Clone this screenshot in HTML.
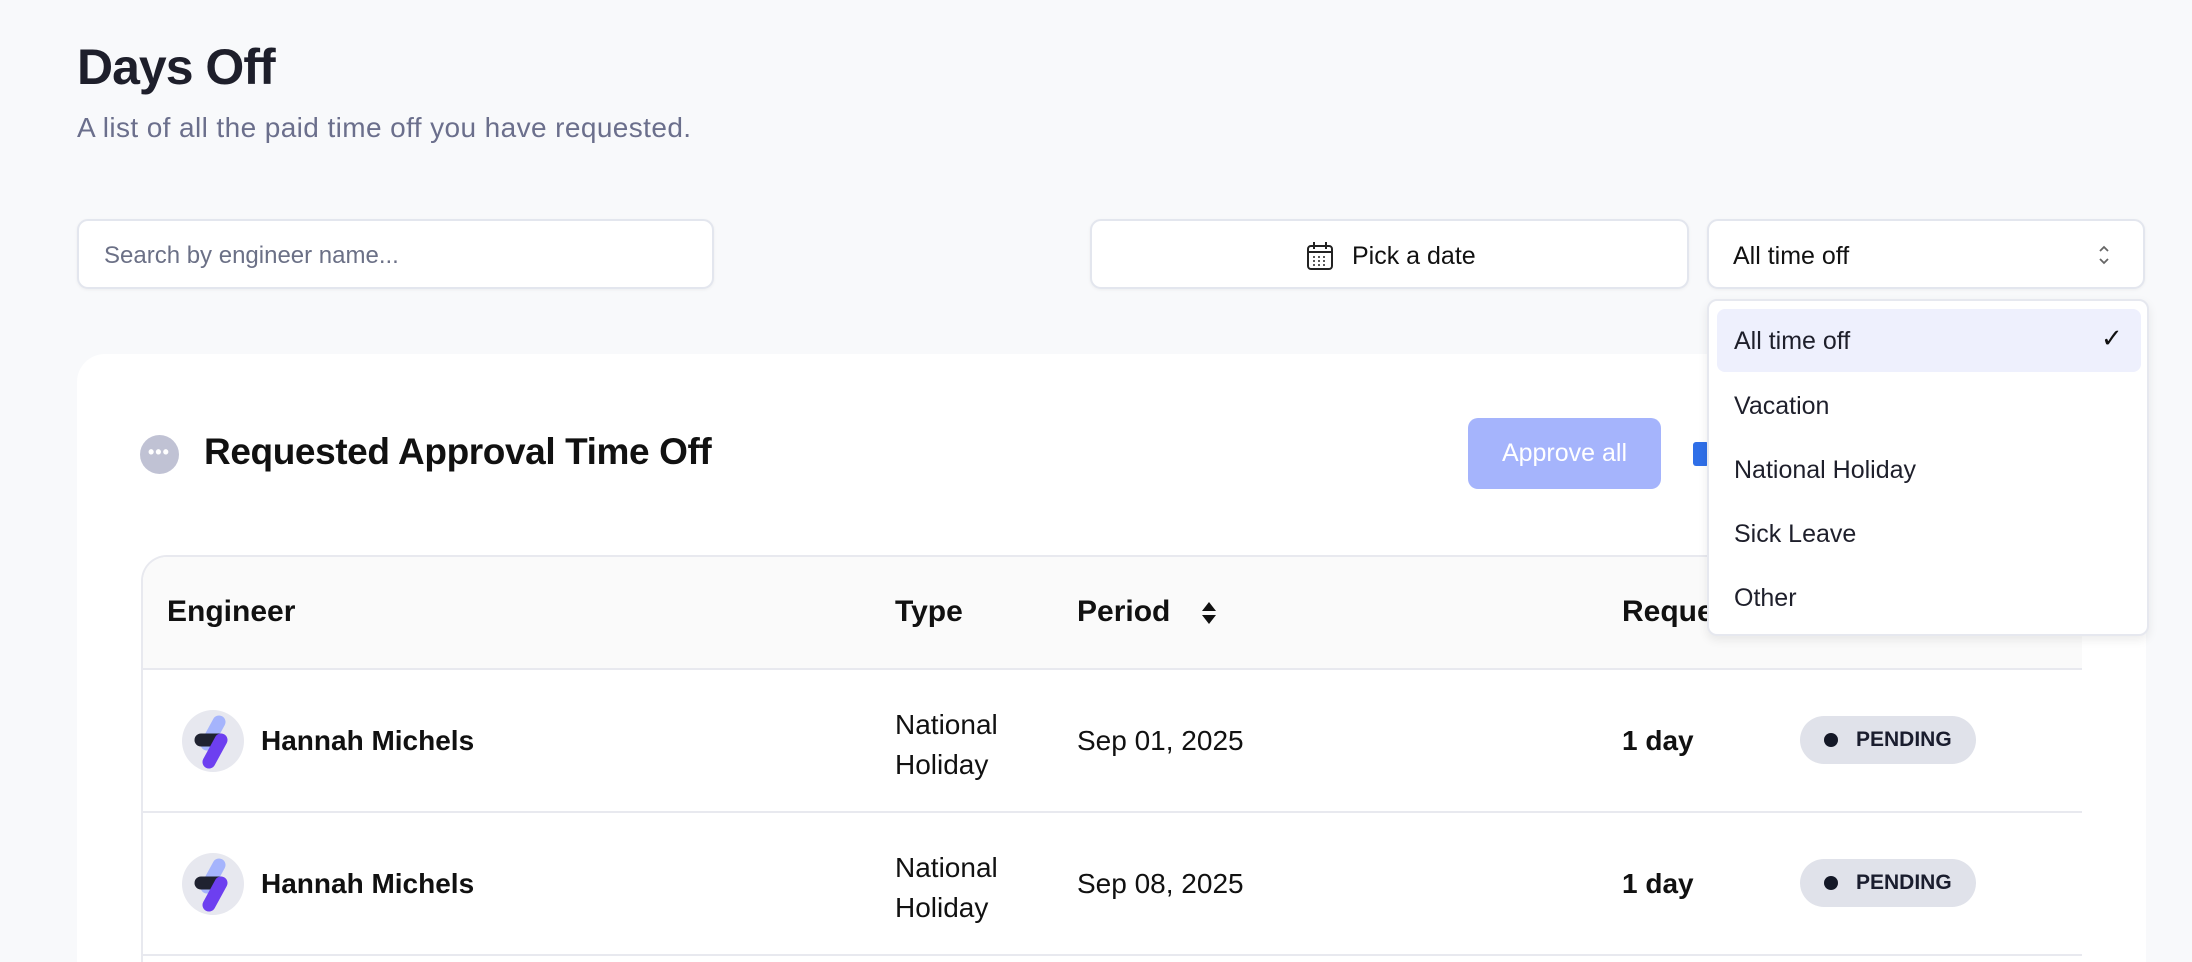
<!DOCTYPE html>
<html><head><meta charset="utf-8"><style>
*{box-sizing:border-box;margin:0;padding:0}
html,body{width:2192px;height:962px;overflow:hidden}
body{background:#f8f9fb;font-family:"Liberation Sans",sans-serif;color:#111827;position:relative}
.abs{position:absolute}
h1{position:absolute;left:77px;top:38px;font-size:50px;font-weight:700;color:#1e1f2b;letter-spacing:-1px}
.sub{left:77px;top:112px;font-size:28px;color:#6b6f8c;letter-spacing:0.4px}
.box{background:#fff;border:2px solid #e3e6ee;border-radius:11px;box-shadow:0 1px 3px rgba(0,0,0,.05)}
.card{left:77px;top:354px;width:2069px;height:608px;background:#fff;border-radius:28px 28px 0 0}
.table{left:141px;top:555px;width:1941px;height:407px;border:2px solid #e8e9ef;border-right:none;border-bottom:none;border-radius:26px 0 0 0;overflow:hidden}
.th{position:absolute;top:0;left:0;right:0;height:113px;background:#fafafa;border-bottom:2px solid #e8e9ef}
.row{position:absolute;left:0;right:0;height:143px;border-bottom:2px solid #e8e9ef}
.hd{position:absolute;top:38px;font-size:30px;font-weight:700;color:#111}
.cell{position:absolute;font-size:28px;color:#111}
.pill{position:absolute;left:1657px;top:46px;width:176px;height:48px;border-radius:24px;background:#e0e2ea;font-size:21px;font-weight:700;color:#1a1d2e;padding-left:56px;line-height:48px}
.pill:before{content:"";position:absolute;left:24px;top:17px;width:14px;height:14px;border-radius:50%;background:#141827}
.dd{left:1707px;top:299px;width:442px;height:337px;background:#fff;border:2px solid #e6e8ef;border-radius:10px;box-shadow:0 4px 10px rgba(0,0,0,.08)}
.it{position:absolute;left:25px;font-size:25px;color:#1e1f2b}
</style></head><body>
<h1>Days Off</h1>
<div class="abs sub">A list of all the paid time off you have requested.</div>
<div class="abs box" style="left:77px;top:219px;width:637px;height:70px"><span class="abs" style="left:25px;top:21px;font-size:24px;color:#6b7086">Search by engineer name...</span></div>
<div class="abs box" style="left:1090px;top:219px;width:599px;height:70px">
<svg class="abs" style="left:214px;top:20px" width="28" height="30" viewBox="0 0 28 30" fill="none" stroke="#222" stroke-width="2"><rect x="2" y="5" width="24" height="23" rx="3"/><path d="M2 11h24M8 1v7M20 1v7"/><g stroke-width="1.6"><path d="M7 16h2M12 16h2M17 16h2M7 20h2M12 20h2M17 20h2M7 24h2M12 24h2M17 24h2"/></g></svg>
<span class="abs" style="left:260px;top:21px;font-size:25px;color:#111">Pick a date</span></div>
<div class="abs box" style="left:1707px;top:219px;width:438px;height:70px"><span class="abs" style="left:24px;top:21px;font-size:25px;color:#111">All time off</span>
<svg class="abs" style="left:388px;top:22px" width="14" height="24" viewBox="0 0 14 24" fill="none" stroke="#666" stroke-width="1.8"><path d="M3 8l4-4 4 4M3 16l4 4 4-4"/></svg></div>

<div class="abs card"></div>
<div class="abs" style="left:140px;top:435px;width:39px;height:39px;border-radius:50%;background:#c0c2d4"><span class="abs" style="left:8px;top:7px;color:#fff;font-size:18px;font-weight:700;letter-spacing:1px">•••</span></div>
<div class="abs" style="left:204px;top:431px;font-size:37px;font-weight:700;color:#111;letter-spacing:-0.4px">Requested Approval Time Off</div>
<div class="abs" style="left:1468px;top:418px;width:193px;height:71px;border-radius:10px;background:#a5b4fc;color:#fff;font-size:25px;text-align:center;line-height:71px">Approve all</div>
<div class="abs" style="left:1693px;top:442px;width:16px;height:24px;border-radius:3px;background:#2f6fe8"></div>

<div class="abs table">
<div class="th">
<div class="hd" style="left:24px">Engineer</div>
<div class="hd" style="left:752px">Type</div>
<div class="hd" style="left:934px">Period</div>
<svg class="abs" style="left:1057px;top:43px" width="18" height="26" viewBox="0 0 18 26"><path d="M9 2l7 9H2zM9 24l7-9H2z" fill="#111"/></svg>
<div class="hd" style="left:1479px">Requested</div>
</div>
<div class="row" style="top:113px">
<svg class="abs" style="left:39px;top:40px" width="62" height="62" viewBox="0 0 62 62"><circle cx="31" cy="31" r="31" fill="#e7e8ef"/><path d="M37 12L25 34" stroke="#a5b4fc" stroke-width="13" stroke-linecap="round"/><path d="M19 30h19" stroke="#1f2230" stroke-width="13" stroke-linecap="round"/><path d="M39 30L27 52" stroke="#6d3ff0" stroke-width="13" stroke-linecap="round"/></svg>
<div class="cell" style="left:118px;top:55px;font-weight:700">Hannah Michels</div>
<div class="cell" style="left:752px;top:35px;line-height:40px">National<br>Holiday</div>
<div class="cell" style="left:934px;top:55px">Sep 01, 2025</div>
<div class="cell" style="left:1479px;top:55px;font-weight:700">1 day</div>
<div class="pill">PENDING</div>
</div>
<div class="row" style="top:256px">
<svg class="abs" style="left:39px;top:40px" width="62" height="62" viewBox="0 0 62 62"><circle cx="31" cy="31" r="31" fill="#e7e8ef"/><path d="M37 12L25 34" stroke="#a5b4fc" stroke-width="13" stroke-linecap="round"/><path d="M19 30h19" stroke="#1f2230" stroke-width="13" stroke-linecap="round"/><path d="M39 30L27 52" stroke="#6d3ff0" stroke-width="13" stroke-linecap="round"/></svg>
<div class="cell" style="left:118px;top:55px;font-weight:700">Hannah Michels</div>
<div class="cell" style="left:752px;top:35px;line-height:40px">National<br>Holiday</div>
<div class="cell" style="left:934px;top:55px">Sep 08, 2025</div>
<div class="cell" style="left:1479px;top:55px;font-weight:700">1 day</div>
<div class="pill">PENDING</div>
</div>
</div>

<div class="abs dd">
<div class="abs" style="left:8px;top:8px;width:424px;height:63px;border-radius:8px;background:#eef0fd"></div>
<div class="it" style="top:26px">All time off</div>
<div class="abs" style="left:392px;top:22px;font-size:26px;color:#111">✓</div>
<div class="it" style="top:91px">Vacation</div>
<div class="it" style="top:155px">National Holiday</div>
<div class="it" style="top:219px">Sick Leave</div>
<div class="it" style="top:283px">Other</div>
</div>
</body></html>
